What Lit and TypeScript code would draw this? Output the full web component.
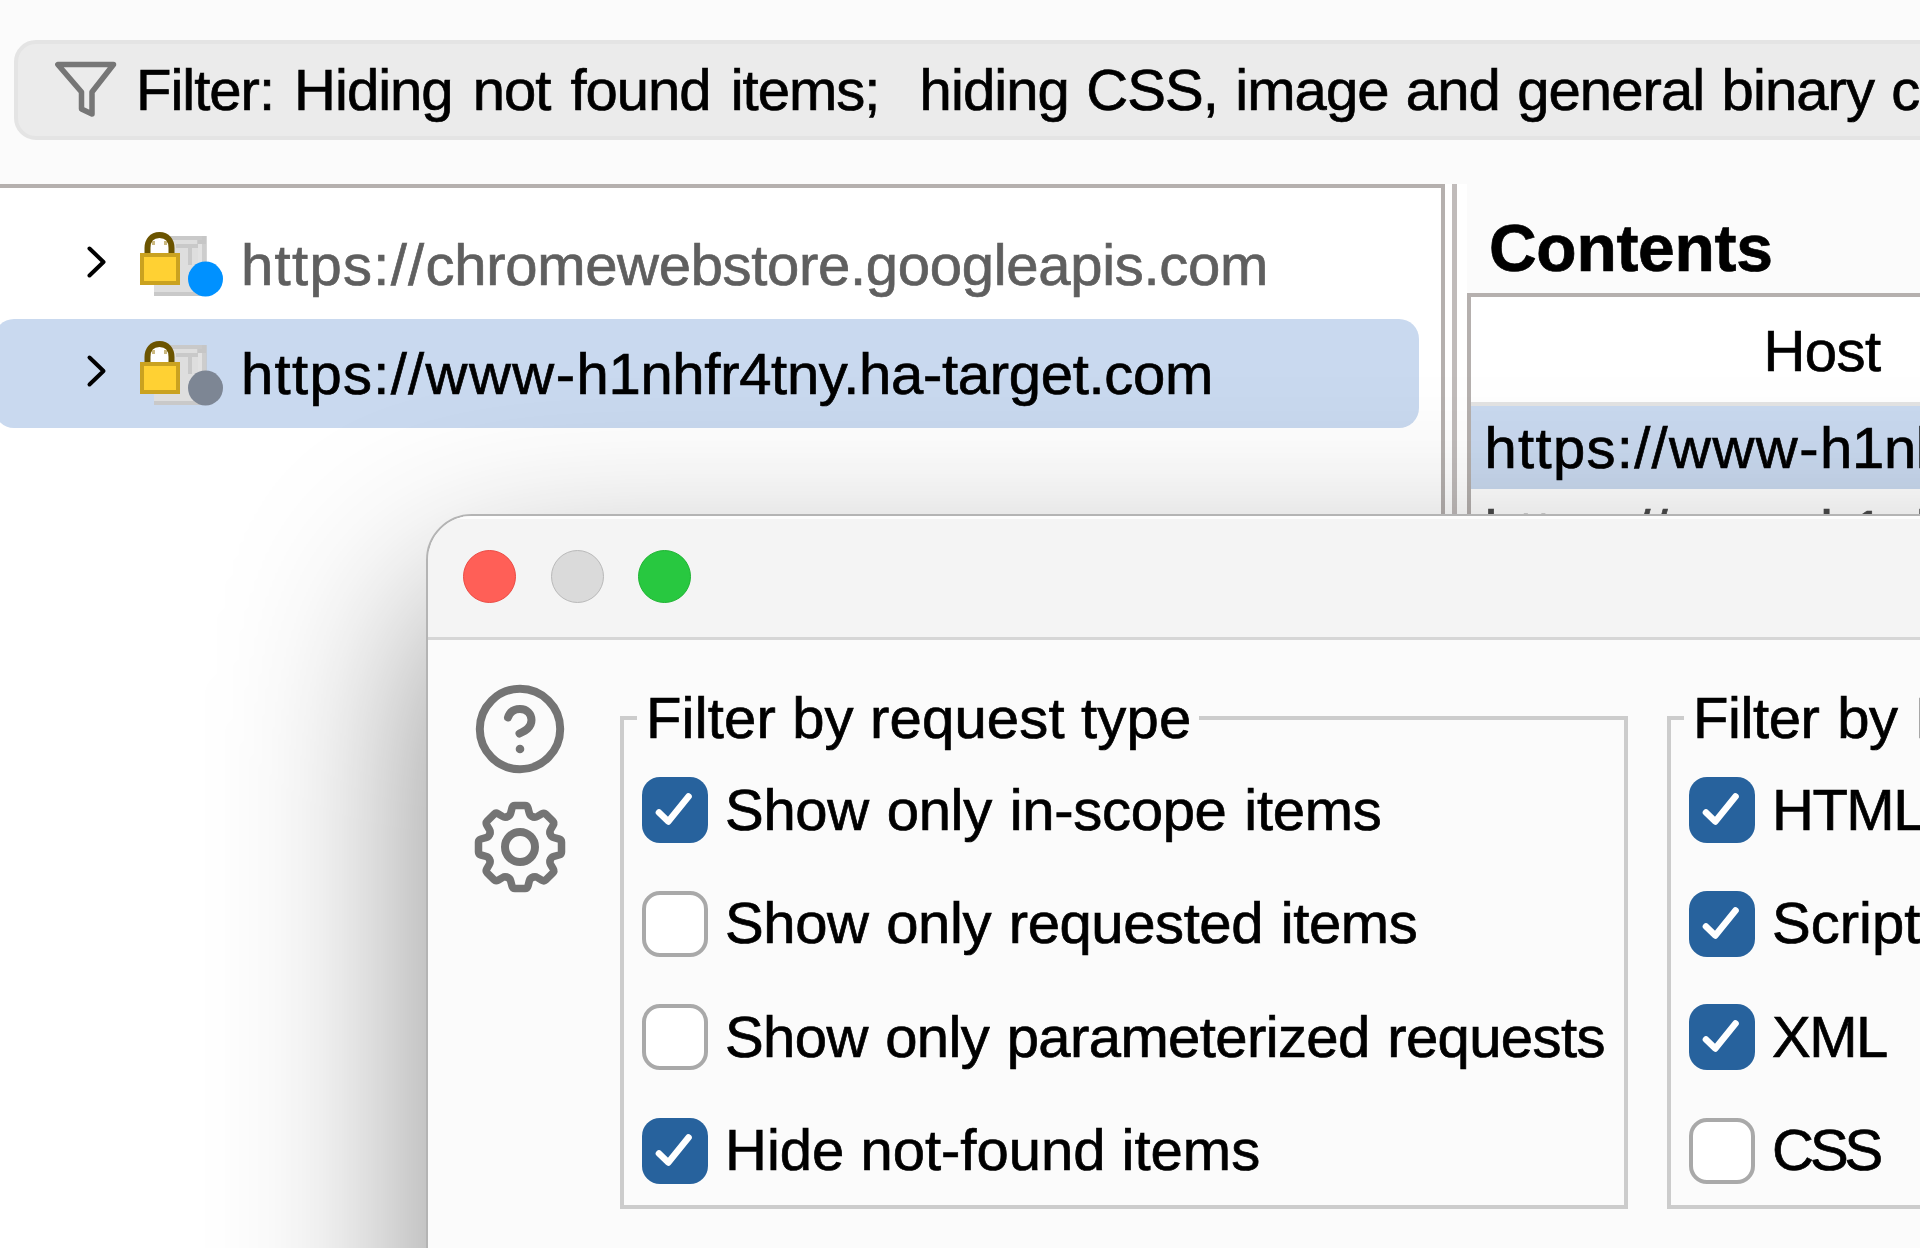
// app.ts - Site map view with the filter settings window on top
import { LitElement, css, html, svg } from "lit";
import { customElement, property } from "lit/decorators.js";

interface FilterOption {
  label: string;
  checked: boolean;
  cls: string;
}

interface SiteNode {
  sub: string;
  host: string;
  state: "live" | "idle";
  selected: boolean;
}

const SITES: SiteNode[] = [
  { sub: "", host: "chromewebstore.googleapis.com", state: "live", selected: false },
  { sub: "www-", host: "h1nhfr4tny.ha-target.com", state: "idle", selected: true },
];

const REQUEST_OPTIONS: FilterOption[] = [
  { label: "Show only in-scope items", checked: true, cls: "scope" },
  { label: "Show only requested items", checked: false, cls: "requested" },
  { label: "Show only parameterized requests", checked: false, cls: "params" },
  { label: "Hide not-found items", checked: true, cls: "missing" },
];

const MIME_OPTIONS: FilterOption[] = [
  { label: "HTML", checked: true, cls: "html" },
  { label: "Script", checked: true, cls: "script" },
  { label: "XML", checked: true, cls: "xml" },
  { label: "CSS", checked: false, cls: "css" },
];

// letter fitting for urls, shared by the tree and the table
const urlStyles = css`
  .scheme {
    letter-spacing: 1.3px;
  }

  .sub {
    letter-spacing: 1.5px;
  }

  .host {
    letter-spacing: -0.3px;
  }
`;

@customElement("check-option")
export class CheckOption extends LitElement {
  static styles = css`
    :host {
      display: flex;
      align-items: center;
      height: 66px;
    }

    .box {
      flex: none;
      box-sizing: border-box;
      width: 66px;
      height: 66px;
      margin-right: 17px;
      border: 4px solid #a9a9a9;
      border-radius: 18px;
      background: #ffffff;
    }

    .box.checked {
      border: none;
      background: #27629d;
    }

    svg {
      display: block;
    }

    .label {
      line-height: 66px;
      margin-top: -1px;
      white-space: pre;
    }
  `;

  @property() label = "";
  @property({ type: Boolean }) checked = false;

  render() {
    return html`
      <span class="box ${this.checked ? "checked" : ""}">
        ${this.checked
          ? html`<svg width="66" height="66" viewBox="0 0 66 66" fill="none" stroke="#fff" stroke-width="6.6" stroke-linecap="round" stroke-linejoin="round">
              <path d="M17 35.5 26.3 44.5 46.5 19.5" />
            </svg>`
          : ""}
      </span>
      <span class="label">${this.label}</span>
    `;
  }
}

@customElement("site-tree")
export class SiteTree extends LitElement {
  static styles = [
    urlStyles,
    css`
      :host {
        display: block;
      }

      .row {
        display: flex;
        align-items: center;
        height: 109px;
        margin-left: -6px;
        padding-left: 90px;
        color: #5f5f5f;
        white-space: pre;
      }

      .row.selected {
        background: #c9d9ef;
        color: #000000;
        border-radius: 20px;
      }

      .chevron {
        flex: none;
        margin: 0 30px 3px 0;
      }

      .icon {
        flex: none;
        margin: 0 17px 2px 0;
      }
    `,
  ];

  private hostIcon(state: string) {
    const dot = state === "live" ? "#0091ff" : "#7d8694";
    return html`
      <svg class="icon" width="84" height="66" viewBox="0 0 84 66">
        <path fill="#c9c9c9" d="M14 5h52v27h-9V9H31v8H14z" />
        <path fill="#dedede" d="M14 9h44v52H14z" />
        <path fill="#c9c9c9" d="M36 13h22v4H36zM48 17h4v17h-4zM14 61h52v4H14z" />
        <path fill="#e2e2e2" d="M58 13h8v48H58z" />
        <path fill="#c4c4c4" d="M57 9h5v4h-5zM62 5h5v27h-5z" opacity=".7" />
        <path fill="#fff" d="M9 24v-8c0-5 4-9.500 10.500-9.500S30 11 30 16v8z" />
        <path fill="none" stroke="#6b5400" stroke-width="6" d="M7.500 24v-7c0-7 4-13 12-13s12 6 12 13V24" />
        <path fill="#cbb980" d="M12 10h3v4h-3zM24 10h3v4h-3z" />
        <rect x="2" y="24" width="36" height="28" fill="#ffd133" stroke="#caa220" stroke-width="4" />
        <circle cx="65.500" cy="48" r="17.500" fill=${dot} />
      </svg>
    `;
  }

  render() {
    return SITES.map(
      (site) => html`
        <div class="row ${site.selected ? "selected" : ""}">
          <svg class="chevron" width="26" height="40" viewBox="0 0 26 40" fill="none" stroke="#000" stroke-width="4" stroke-linecap="round" stroke-linejoin="round">
            <path d="M5.500 5.500 19.500 19 5.500 32.500" />
          </svg>
          ${this.hostIcon(site.state)}
          <span><span class="scheme">https://</span><span class="sub">${site.sub}</span><span class="host">${site.host}</span></span>
        </div>
      `
    );
  }
}

@customElement("filter-window")
export class FilterWindow extends LitElement {
  static styles = css`
    :host {
      display: flex;
      flex-direction: column;
      box-sizing: border-box;
      border: 2px solid #b4b4b4;
      border-radius: 46px;
      background: #fbfbfb;
      overflow: hidden;
    }

    .titlebar {
      display: flex;
      align-items: center;
      gap: 34.500px;
      box-sizing: border-box;
      height: 124px;
      padding: 0 0 3px 35px;
      border-top: 3px solid #fdfdfd;
      border-bottom: 3px solid #d6d6d6;
      background: #f4f4f4;
    }

    .light {
      box-sizing: border-box;
      width: 53px;
      height: 53px;
      border-radius: 50%;
      border: 1.5px solid;
    }

    .close {
      background: #ff5f57;
      border-color: #ea4a43;
    }

    .minimize {
      background: #dadada;
      border-color: #b9b9b9;
    }

    .zoom {
      background: #28c840;
      border-color: #1fb433;
    }

    .content {
      display: flex;
      padding: 45px 0 0 46px;
    }

    .tools {
      display: flex;
      flex-direction: column;
      gap: 26px;
      width: 146px;
      margin-top: -2px;
    }

    .tools svg {
      display: block;
    }

    fieldset {
      flex: none;
      box-sizing: border-box;
      min-width: 0;
      width: 1008px;
      height: 524px;
      margin: 0 39px 0 0;
      padding: 0 0 0 18px;
      border: 4px solid #cccccc;
    }

    legend {
      height: 66px;
      padding: 0 8px 0 9px;
      margin-left: -5px;
      line-height: 66px;
      white-space: pre;
      letter-spacing: 0.17px;
    }

    .mime legend {
      letter-spacing: -0.400px;
      word-spacing: 2px;
    }

    .options {
      display: flex;
      flex-direction: column;
      gap: 47.500px;
      padding-top: 26px;
    }

    .scope {
      letter-spacing: -0.3px;
      word-spacing: 2px;
    }

    .requested {
      letter-spacing: -0.4px;
      word-spacing: 2px;
    }

    .params {
      letter-spacing: -0.6px;
      word-spacing: 2px;
    }

    .html,
    .xml {
      letter-spacing: -1.500px;
    }

    .css {
      letter-spacing: -4px;
    }
  `;

  private toolIcons() {
    const teeth = [0, 45, 90, 135, 180, 225, 270, 315];
    // one tooth, repeated around the hub
    const tooth = "M-12.600 -30.400C-10.800 -31 -9.800 -32 -9.300 -34L-8 -39Q-7.300 -41.500 -5 -41.500H5Q7.300 -41.500 8 -39L9.300 -34C9.800 -32 10.800 -31 12.600 -30.400";
    return html`
      <div class="tools">
        <svg width="92" height="92" viewBox="-46 -46 92 92" fill="none" stroke="#747474" stroke-width="8" stroke-linecap="round">
          <circle r="40.200" />
          <path d="M-12-11.500C-10-17.500-6-20 0-20C7-20 11.500-15 11.500-9C11.500-1.500 5.500 1.500-.500 4.500" />
          <circle cx="0" cy="20" r="4.300" fill="#747474" stroke="none" />
        </svg>
        <svg width="92" height="92" viewBox="-46 -46 92 92" fill="none" stroke="#747474" stroke-width="7.500" stroke-linecap="round" stroke-linejoin="round">
          ${teeth.map((angle) => svg`<path d=${tooth} transform="rotate(${angle})" />`)}
          <circle r="15" stroke-width="8" />
        </svg>
      </div>
    `;
  }

  private group(title: string, cls: string, options: FilterOption[]) {
    return html`
      <fieldset class=${cls}>
        <legend>${title}</legend>
        <div class="options">
          ${options.map((o) => html`<check-option class=${o.cls} label=${o.label} ?checked=${o.checked}></check-option>`)}
        </div>
      </fieldset>
    `;
  }

  render() {
    return html`
      <div class="titlebar">
        <span class="light close"></span>
        <span class="light minimize"></span>
        <span class="light zoom"></span>
      </div>
      <div class="content">
        ${this.toolIcons()}
        ${this.group("Filter by request type", "request", REQUEST_OPTIONS)}
        ${this.group("Filter by MIME type", "mime", MIME_OPTIONS)}
      </div>
    `;
  }
}

@customElement("app-root")
export class AppRoot extends LitElement {
  static styles = [
    urlStyles,
    css`
      :host {
        position: relative;
        display: flex;
        flex-direction: column;
        box-sizing: border-box;
        width: 1920px;
        height: 1248px;
        padding-top: 40px;
        overflow: hidden;
        background: #fbfbfb;
        color: #000000;
        font-family: "Liberation Sans", Arial, sans-serif;
        font-size: 58px;
        -webkit-text-stroke: 0.7px currentColor;
      }

      .filter-bar {
        flex: none;
        display: flex;
        align-items: center;
        box-sizing: border-box;
        width: 2200px;
        height: 100px;
        margin-left: 14px;
        padding-left: 37px;
        border: 4px solid #e4e4e4;
        border-radius: 22px;
        background: #ebebeb;
        white-space: pre;
      }

      .filter-bar svg {
        flex: none;
        margin-right: 17px;
      }

      .status {
        letter-spacing: -1px;
        word-spacing: 5px;
        margin-top: -1px;
      }

      .rules {
        letter-spacing: -0.9px;
        word-spacing: 2px;
      }

      .panes {
        flex: 1;
        display: flex;
        margin-top: 44px;
      }

      .tree-pane {
        flex: none;
        box-sizing: border-box;
        width: 1445px;
        padding: 22px 22px 0 0;
        border: solid #b5b0ae;
        border-width: 4px 4px 0 0;
        background: #ffffff;
      }

      .divider {
        flex: none;
        box-sizing: border-box;
        width: 22px;
        padding-left: 7px;
        background: #ffffff;
      }

      .divider::before {
        content: "";
        display: block;
        width: 5px;
        height: 100%;
        background: #c0bbba;
      }

      .contents {
        flex: none;
        display: flex;
        flex-direction: column;
        width: 712px;
      }

      h2 {
        box-sizing: border-box;
        height: 109px;
        margin: 0;
        padding: 19px 0 0 22px;
        font-size: 66px;
        line-height: 90px;
        letter-spacing: -0.3px;
      }

      .table {
        flex: 1;
        border: solid #b5b0ae;
        border-width: 4px 0 0 4px;
        background: #ffffff;
      }

      .head {
        box-sizing: border-box;
        height: 109px;
        padding: 3px 6px 0 0;
        border-bottom: 4px solid #e3e3e3;
        line-height: 102px;
        letter-spacing: -0.6px;
        text-align: center;
      }

      .cell {
        height: 83px;
        padding-left: 13.500px;
        line-height: 83px;
        white-space: pre;
        color: #4a4a4a;
      }

      .cell.selected {
        background: #c9d9ef;
        color: #000000;
      }

      filter-window {
        position: absolute;
        left: 426px;
        top: 514px;
        width: 2300px;
        height: 1500px;
        box-shadow: 0 84px 200px rgba(0, 0, 0, 0.46);
      }
    `,
  ];

  render() {
    const url = html`<span class="scheme">https://</span><span class="sub">www-</span><span class="host">h1nhfr4tny.ha-target.com</span>`;
    return html`
      <div class="filter-bar">
        <svg width="64" height="60" viewBox="0 0 64 60" fill="none" stroke="#767676" stroke-width="5.500" stroke-linejoin="round">
          <path d="M2.800 4.500H58.500L37 32V54L26.500 49V32Z" />
        </svg>
        <span class="status">Filter: Hiding not found items;  <span class="rules">hiding CSS, image and general binary content</span></span>
      </div>
      <div class="panes">
        <div class="tree-pane"><site-tree></site-tree></div>
        <div class="divider"></div>
        <div class="contents">
          <h2>Contents</h2>
          <div class="table">
            <div class="head">Host</div>
            <div class="cell selected">${url}</div>
            <div class="cell">${url}</div>
          </div>
        </div>
      </div>
      <filter-window></filter-window>
    `;
  }
}

declare global {
  interface HTMLElementTagNameMap {
    "app-root": AppRoot;
    "check-option": CheckOption;
    "site-tree": SiteTree;
    "filter-window": FilterWindow;
  }
}
